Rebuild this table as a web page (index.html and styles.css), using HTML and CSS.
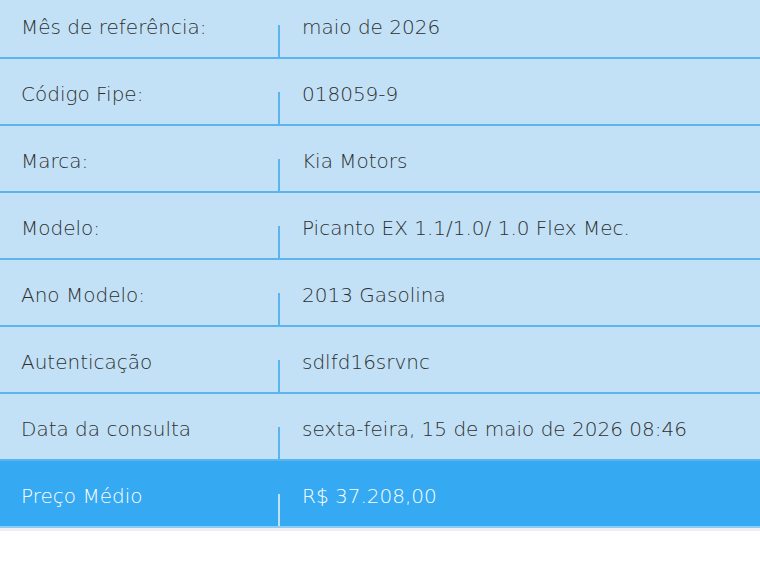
FILE: index.html
```
<!DOCTYPE html>
<html lang="pt-BR">
<head>
    <meta charset="UTF-8">
    <meta name="viewport" content="width=device-width, initial-scale=1.0">
    <title>Resultado da consulta FIPE</title>
    <link rel="stylesheet" href="styles.css">
</head>
<body>
    <div class="result-table">
        <div class="row">
            <div class="label">Mês de referência:</div>
            <div class="divider"></div>
            <div class="value">maio de 2026</div>
        </div>
        <div class="row">
            <div class="label">Código Fipe:</div>
            <div class="divider"></div>
            <div class="value">018059-9</div>
        </div>
        <div class="row">
            <div class="label">Marca:</div>
            <div class="divider"></div>
            <div class="value">Kia Motors</div>
        </div>
        <div class="row">
            <div class="label">Modelo:</div>
            <div class="divider"></div>
            <div class="value">Picanto EX 1.1/1.0/ 1.0 Flex Mec.</div>
        </div>
        <div class="row">
            <div class="label">Ano Modelo:</div>
            <div class="divider"></div>
            <div class="value">2013 Gasolina</div>
        </div>
        <div class="row">
            <div class="label">Autenticação</div>
            <div class="divider"></div>
            <div class="value">sdlfd16srvnc</div>
        </div>
        <div class="row">
            <div class="label">Data da consulta</div>
            <div class="divider"></div>
            <div class="value">sexta-feira, 15 de maio de 2026 08:46</div>
        </div>
        <div class="row price">
            <div class="label">Preço Médio</div>
            <div class="divider"></div>
            <div class="value">R$ 37.208,00</div>
        </div>
    </div>
</body>
</html>
```
FILE: styles.css
```
body {
    margin: 0;
    padding: 0;
    background-color: #ffffff;
    font-family: "DejaVu Sans", "Liberation Sans", sans-serif;
}
.result-table {
    margin-top: -8px;
    border-bottom: 3px solid #eeeef3;
}
.row {
    display: flex;
    height: 65px;
    background-color: #c2e1f6;
    border-bottom: 2px solid #5ab4ee;
    color: #2f2f2f;
    font-size: 20px;
    font-weight: 200;
    line-height: 24px;
}
.label {
    width: 257px;
    padding: 23px 0 0 21px;
}
.divider {
    align-self: flex-end;
    width: 2px;
    height: 32px;
    background-color: #5ab4ee;
}
.value {
    padding: 23px 0 0 22px;
}
.price {
    background-color: #35a9f2;
    border-bottom-color: #8ccdf5;
    color: #ffffff;
}
.price .divider {
    background-color: #c2e1f6;
}
```
